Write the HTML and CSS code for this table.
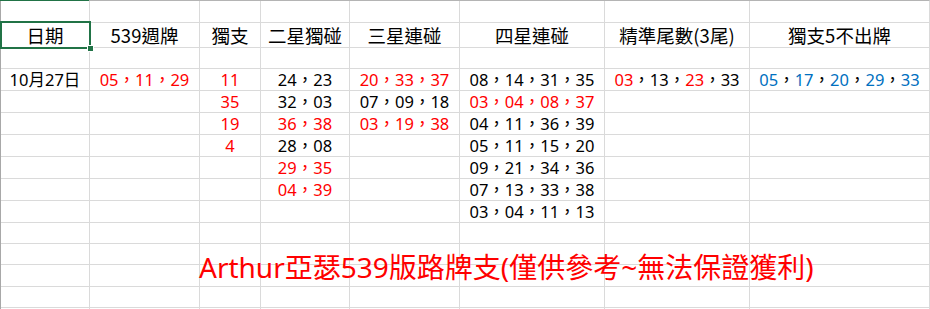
FILE: index.html
```html
<!DOCTYPE html>
<html lang="zh-Hant">
<head>
<meta charset="utf-8">
<title>539</title>
<link rel="stylesheet" href="styles.css">
</head>
<body>
<div class="sheet">
  <div class="grid">
    <!-- row 1 -->
    <div class="c"></div><div class="c"></div><div class="c"></div><div class="c"></div><div class="c"></div><div class="c"></div><div class="c"></div><div class="c"></div>
    <!-- row 2 headers -->
    <div class="c h sel">日期</div>
    <div class="c h">539週牌</div>
    <div class="c h">獨支</div>
    <div class="c h">二星獨碰</div>
    <div class="c h">三星連碰</div>
    <div class="c h">四星連碰</div>
    <div class="c h">精準尾數(3尾)</div>
    <div class="c h">獨支5不出牌</div>
    <!-- row 3 -->
    <div class="c"></div><div class="c"></div><div class="c"></div><div class="c"></div><div class="c"></div><div class="c"></div><div class="c"></div><div class="c"></div>
    <!-- row 4 -->
    <div class="c">10月27日</div>
    <div class="c red">05，11，29</div>
    <div class="c red">11</div>
    <div class="c">24，23</div>
    <div class="c red">20，33，37</div>
    <div class="c">08，14，31，35</div>
    <div class="c"><span class="red">03</span>，13，<span class="red">23</span>，33</div>
    <div class="c"><span class="blue">05</span>，<span class="blue">17</span>，<span class="blue">20</span>，<span class="blue">29</span>，<span class="blue">33</span></div>
    <!-- row 5 -->
    <div class="c"></div><div class="c"></div>
    <div class="c red">35</div>
    <div class="c">32，03</div>
    <div class="c">07，09，18</div>
    <div class="c red">03，04，08，37</div>
    <div class="c"></div><div class="c"></div>
    <!-- row 6 -->
    <div class="c"></div><div class="c"></div>
    <div class="c red">19</div>
    <div class="c red">36，38</div>
    <div class="c red">03，19，38</div>
    <div class="c">04，11，36，39</div>
    <div class="c"></div><div class="c"></div>
    <!-- row 7 -->
    <div class="c"></div><div class="c"></div>
    <div class="c red">4</div>
    <div class="c">28，08</div>
    <div class="c"></div>
    <div class="c">05，11，15，20</div>
    <div class="c"></div><div class="c"></div>
    <!-- row 8 -->
    <div class="c"></div><div class="c"></div><div class="c"></div>
    <div class="c red">29，35</div>
    <div class="c"></div>
    <div class="c">09，21，34，36</div>
    <div class="c"></div><div class="c"></div>
    <!-- row 9 -->
    <div class="c"></div><div class="c"></div><div class="c"></div>
    <div class="c red">04，39</div>
    <div class="c"></div>
    <div class="c">07，13，33，38</div>
    <div class="c"></div><div class="c"></div>
    <!-- row 10 -->
    <div class="c"></div><div class="c"></div><div class="c"></div><div class="c"></div><div class="c"></div>
    <div class="c">03，04，11，13</div>
    <div class="c"></div><div class="c"></div>
    <!-- rows 11-15 -->
    <div class="c"></div><div class="c"></div><div class="c"></div><div class="c"></div><div class="c"></div><div class="c"></div><div class="c"></div><div class="c"></div>
    <div class="c"></div><div class="c"></div><div class="c"></div><div class="c"></div><div class="c"></div><div class="c"></div><div class="c"></div><div class="c"></div>
    <div class="c"></div><div class="c"></div><div class="c"></div><div class="c"></div><div class="c"></div><div class="c"></div><div class="c"></div><div class="c"></div>
    <div class="c"></div><div class="c"></div><div class="c"></div><div class="c"></div><div class="c"></div><div class="c"></div><div class="c"></div><div class="c"></div>
    <div class="c"></div><div class="c"></div><div class="c"></div><div class="c"></div><div class="c"></div><div class="c"></div><div class="c"></div><div class="c"></div>
  </div>
  <div class="note">Arthur亞瑟539版路牌支(僅供參考~無法保證獲利)</div>
</div>
</body>
</html>
```

FILE: styles.css
```css
html, body {
  margin: 0;
  padding: 0;
  background: #ffffff;
}
body {
  width: 930px;
  height: 309px;
  overflow: hidden;
  font-family: "Noto Sans", "Noto Sans CJK TC", sans-serif;
}
.sheet {
  position: relative;
  width: 930px;
  height: 309px;
  overflow: hidden;
}
.sheet::before {
  content: "";
  position: absolute;
  left: 0;
  top: 0;
  width: 89px;
  height: 1px;
  background: #217346;
  z-index: 3;
}
.grid {
  display: grid;
  grid-template-columns: 88px 109px 60px 88px 109px 144px 144px 179px;
  grid-template-rows: 21px 24px 20px 21px 21px 21px 21px 21px 21px 21px 20px 20px 21px 20px 21px;
  gap: 1px;
  background: #dadada;
  border-top: 1px solid #b4b4b4;
  border-left: 1px solid #a8a8a8;
  border-right: 1px solid #dadada;
  width: 928px;
}
.c {
  background: #ffffff;
  display: flex;
  align-items: center;
  justify-content: center;
  font-size: 16.5px;
  color: #000000;
  white-space: nowrap;
  line-height: 1;
  padding-top: 1px;
  box-sizing: border-box;
}
.h {
  font-size: 18.5px;
  font-family: "Noto Sans CJK TC", "Noto Sans", sans-serif;
  padding-top: 0;
}
.red { color: #ff0000; }
.blue { color: #0070c0; }
.sel {
  position: relative;
}
.sel::after {
  content: "";
  position: absolute;
  left: -1px;
  top: -2px;
  right: -2px;
  bottom: -2px;
  border: 2px solid #217346;
  z-index: 2;
}
.sel::before {
  content: "";
  position: absolute;
  right: -5px;
  bottom: -5px;
  width: 5px;
  height: 5px;
  background: #217346;
  border: 1px solid #ffffff;
  z-index: 3;
}
.note {
  position: absolute;
  left: 199px;
  top: 249px;
  font-size: 28px;
  line-height: 36px;
  color: #ff0000;
  white-space: nowrap;
  font-family: "Noto Sans", "Noto Sans CJK TC", sans-serif;
}
```
